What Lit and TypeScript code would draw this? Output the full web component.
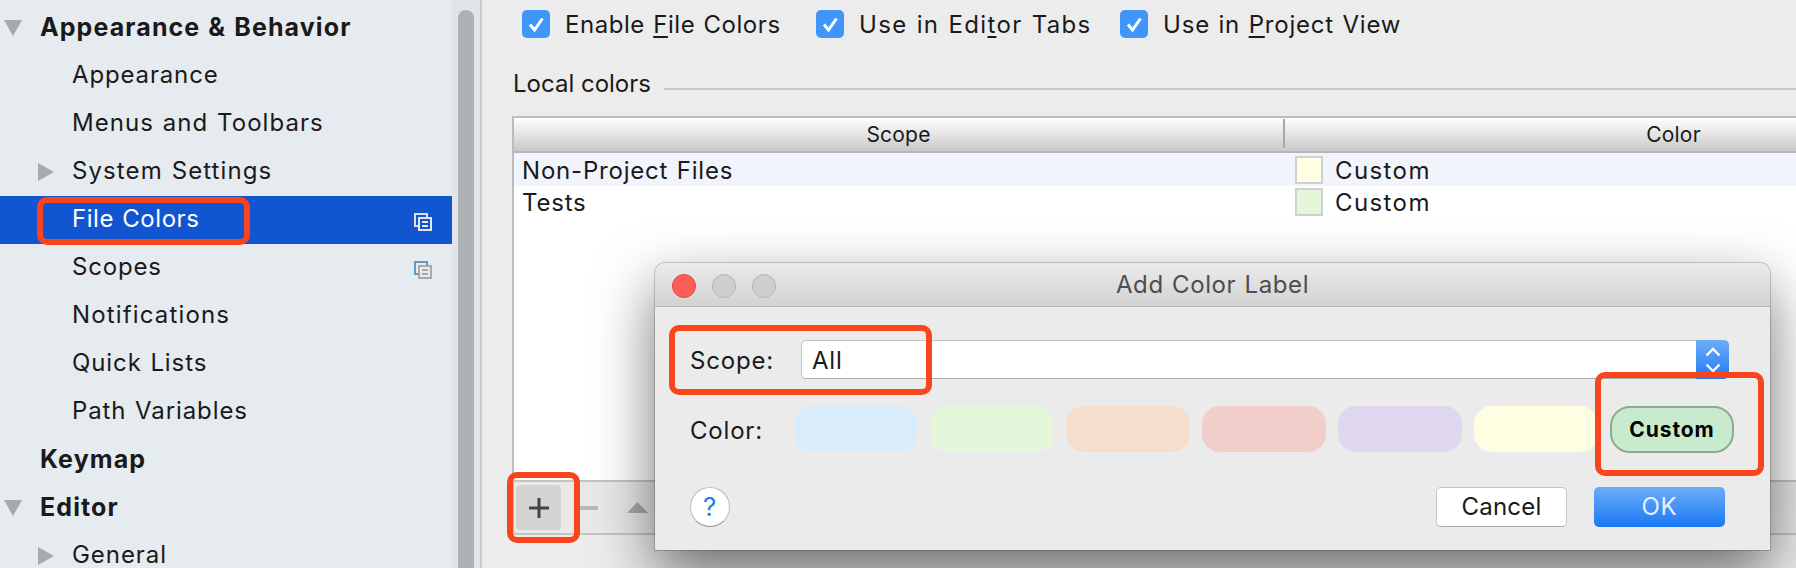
import { LitElement, html, css, svg } from "lit";
import { customElement } from "lit/decorators.js";

type NavRow = { label: string; bold?: boolean; arrow?: "down" | "right"; selected?: boolean; icon?: boolean; ls?: number };

const NAV: NavRow[] = [
  { label: "Appearance & Behavior", bold: true, arrow: "down" },
  { label: "Appearance", ls: 0.85 },
  { label: "Menus and Toolbars", ls: 1.05 },
  { label: "System Settings", arrow: "right", ls: 1.1 },
  { label: "File Colors", selected: true, icon: true, ls: 0.55 },
  { label: "Scopes", icon: true, ls: 0.8 },
  { label: "Notifications", ls: 1.15 },
  { label: "Quick Lists", ls: 0.9 },
  { label: "Path Variables", ls: 0.9 },
  { label: "Keymap", bold: true },
  { label: "Editor", bold: true, arrow: "down" },
  { label: "General", arrow: "right", ls: 0.95 },
];

const PILLS = ["#d9ecfc", "#e5f7da", "#f5dfcc", "#f2cecb", "#dfd6ef", "#fefee2"];

const check = svg`<svg viewBox="0 0 28 28" width="28" height="28"><path d="M8 14.5l4.5 5.5L20.5 8.5" fill="none" stroke="#fff" stroke-width="3"/></svg>`;

function copyIcon(back: string, front: string) {
  return svg`<svg viewBox="0 0 18 18" width="18" height="18" fill="none" stroke-width="2">
    <path d="M13 1H1v12" stroke=${back}/><path d="M1 1h12v3M1 1v12h3" stroke=${back}/>
    <rect x="5" y="5" width="12" height="12" stroke=${front}/>
    <path d="M8 9h6M8 13h6" stroke=${front}/></svg>`;
}

@customElement("app-root")
export class AppRoot extends LitElement {
  static styles = css`
    :host {
      display: flex;
      position: relative;
      width: 1796px;
      height: 568px;
      overflow: hidden;
      background: #ececec;
      font-family: Inter, "Liberation Sans", sans-serif;
      font-size: 24px;
      line-height: 24px;
      letter-spacing: 0.8px;
      word-spacing: 1px;
      color: #1a1a1a;
    }
    .side {
      width: 452px;
      flex: none;
      background: #e6ebf0;
      padding-top: 4px;
      box-sizing: border-box;
    }
    .row {
      height: 48px;
      box-sizing: border-box;
      display: flex;
      align-items: center;
      position: relative;
      padding: 0 0 3px 73px;
      margin: 0;
    }
    .row span.lbl { margin-left: -1px; }
    .row.bold { padding-left: 41px; font-weight: 700; font-size: 25px; letter-spacing: 1.1px; }
    .row.selected { background: #1255d0; color: #fff; }
    .arrow { position: absolute; top: 50%; }
    .arrow.down {
      left: 4px; margin-top: -8px;
      border-left: 9px solid transparent;
      border-right: 9px solid transparent;
      border-top: 16px solid #a9a9a9;
    }
    .arrow.right {
      left: 38px; margin-top: -9px;
      border-top: 9px solid transparent;
      border-bottom: 9px solid transparent;
      border-left: 16px solid #a9a9a9;
    }
    .copy { position: absolute; left: 414px; top: 15px; height: 18px; }
    .track {
      flex: none;
      background: #e1e5e9;
      border-right: 2px solid #c9c9c9;
      padding: 10px 0 0 6px;
      width: 22px;
    }
    .thumb { width: 16px; height: 100%; background: #adb0b5; border-radius: 8px 8px 0 0; }
    .main { flex: 1; min-width: 0; display: flex; flex-direction: column; }
    .checks { display: flex; padding: 10px 0 0 40px; height: 28px; letter-spacing: 0.55px; }
    .check { display: flex; align-items: center; gap: 15px; }
    .check > span:last-child { padding-top: 2px; }
    .check:nth-child(1) { width: 294px; }
    .check:nth-child(2) { width: 304px; letter-spacing: 1.35px; }
    .check:nth-child(3) { letter-spacing: 0.8px; }
    .box { width: 28px; height: 28px; border-radius: 5px; background: #3f96f8; flex: none; }
    .check u { text-underline-offset: 3px; }
    .legend { display: flex; height: 30px; margin: 30px 0 0 31px; padding-top: 2px; box-sizing: border-box; align-items: center; gap: 13px; letter-spacing: 0; word-spacing: 0; }
    .legend i { flex: 1; height: 2px; background: #c8c8c8; margin-top: 10px; }
    .table {
      flex: 1;
      margin: 18px 0 33px 30px;
      width: 1550px;
      display: flex;
      flex-direction: column;
      border-left: 2px solid #bcbcbc;
      border-top: 2px solid #bcbcbc;
      border-bottom: 2px solid #c4c4c4;
    }
    .head {
      display: grid;
      grid-template-columns: 769px 1fr;
      height: 33px;
      flex: none;
      background: linear-gradient(#fff, #c9c9c9);
      border-bottom: 2px solid #b6b6b6;
      font-size: 21px;
      letter-spacing: 0.2px;
      text-align: center;
      line-height: 33px;
    }
    .head span + span { position: relative; }
    .head span + span::before {
      content: "";
      position: absolute;
      left: 0; top: 1px; bottom: 3px;
      width: 2px;
      background: #a8a8a8;
    }
    .body { flex: 1; background: #fff; }
    .tr { display: grid; grid-template-columns: 769px 1fr; align-items: center; box-sizing: border-box; padding-top: 2px; }
    .tr.r1 { height: 33px; background: #f1f4fa; }
    .tr.r2 { height: 32px; padding-top: 1px; }
    .tr > span:first-child { padding-left: 8px; }
    .cell { display: flex; align-items: center; gap: 12px; padding-left: 12px; letter-spacing: 1.4px; }
    .sw { width: 24px; height: 24px; margin-top: -2px; border: 2px solid #d0d0d0; flex: none; }
    .sw.y { background: #fefee2; }
    .sw.g { background: #e5f7da; }
    .bar {
      height: 51px;
      flex: none;
      background: #e9e9e9;
      border-top: 2px solid #c4c4c4;
      display: flex;
      align-items: center;
      padding-left: 2px;
    }
    .plus {
      width: 45px; height: 45px;
      background: #d4d4d4;
      border-radius: 4px;
      display: flex; align-items: center; justify-content: center;
    }
    .minus { margin-left: 19px; display: block; }
    .up { margin-left: 29px; display: block; }
    .dialog {
      position: absolute;
      left: 655px; top: 263px;
      width: 1115px; height: 287px;
      display: flex;
      flex-direction: column;
      background: #ebebeb;
      border-radius: 10px 10px 0 0;
      box-shadow: 0 0 0 1px rgba(0,0,0,.18), 0 24px 60px rgba(0,0,0,.55);
    }
    .title {
      height: 44px;
      flex: none;
      position: relative;
      display: flex;
      align-items: center;
      justify-content: center;
      background: linear-gradient(#ebebeb, #d3d3d3);
      border-bottom: 1px solid #b4b4b4;
      border-radius: 10px 10px 0 0;
      color: #4d4d4d;
      box-sizing: border-box;
      letter-spacing: 0.6px;
    }
    .lights { position: absolute; left: 17px; top: 11px; display: flex; gap: 16px; }
    .lights b { width: 24px; height: 24px; border-radius: 50%; background: #cfcfcf; border: 1px solid #b5b5b5; box-sizing: border-box; }
    .lights b:first-child { background: #fc5f57; border-color: #df4a43; }
    .dbody { flex: 1; display: flex; flex-direction: column; padding: 33px 35px 23px 35px; }
    .frow { display: flex; align-items: center; height: 39px; }
    .frow label { width: 111px; flex: none; padding-top: 2px; }
    .combo {
      flex: 1; height: 39px;
      margin-right: 6px;
      box-sizing: border-box;
      background: #fff;
      border: 1px solid #c4c4c4;
      border-bottom-color: #aaa;
      border-radius: 5px;
      display: flex;
      align-items: center;
      justify-content: space-between;
      padding-left: 10px;
    }
    .combo > span:first-child { padding-top: 2px; }
    .stepper {
      width: 33px; height: 39px;
      margin-right: -1px;
      background: linear-gradient(#6cadf8, #1d7bf6);
      border-radius: 0 5px 5px 0;
      display: flex; align-items: center; justify-content: center;
    }
    .crow { display: flex; align-items: flex-start; height: 47px; margin-top: 27px; }
    .crow label { width: 104px; flex: none; line-height: 50px; }
    .pills { display: flex; gap: 12px; }
    .pill { width: 124px; height: 46px; border-radius: 18px; }
    .custom {
      width: 124px; height: 47px;
      box-sizing: border-box;
      margin-left: 12px;
      border-radius: 20px;
      background: #c9ebcd;
      border: 2px solid #90a991;
      color: #000;
      font-weight: 700;
      font-size: 21px;
      letter-spacing: 0.9px;
      display: flex; align-items: center; justify-content: center;
    }
    .foot { display: flex; align-items: center; margin-top: auto; height: 40px; gap: 27px; }
    .help {
      width: 40px; height: 40px;
      box-sizing: border-box;
      border-radius: 50%;
      background: #fff;
      border: 1px solid #bdbdbd;
      border-bottom-color: #999;
      color: #1a80f6;
      font-size: 26px;
      display: flex; align-items: center; justify-content: center;
      margin-right: auto;
    }
    .btn {
      height: 40px;
      box-sizing: border-box;
      border-radius: 5px;
      display: flex; align-items: center; justify-content: center;
    }
    .btn.cancel { width: 131px; background: #fff; border: 1px solid #c6c6c6; border-bottom-color: #aaa; letter-spacing: 0.2px; }
    .btn.ok { width: 131px; margin-right: 10px; background: linear-gradient(#6cadf8, #1a78f6); color: #e8f1fd; }
    .mark {
      position: absolute;
      box-sizing: border-box;
      border: 6px solid #fa441c;
      border-radius: 10px;
    }
    .m1 { left: 37px; top: 197px; width: 213px; height: 48px; }
    .m2 { left: 507px; top: 472px; width: 73px; height: 71px; }
    .m3 { left: 669px; top: 325px; width: 263px; height: 70px; }
    .m4 { left: 1595px; top: 372px; width: 169px; height: 104px; }
  `;

  private navRow(r: NavRow) {
    const cls = ["row", r.bold ? "bold" : "", r.selected ? "selected" : ""].join(" ");
    return html`<div class=${cls}>
      ${r.arrow ? html`<span class="arrow ${r.arrow}"></span>` : ""}
      <span class="lbl" style=${r.ls ? `letter-spacing:${r.ls}px` : ""}>${r.label}</span>
      ${r.icon
        ? html`<span class="copy">${r.selected ? copyIcon("#d8e2f5", "#e6e6e6") : copyIcon("#5b9bc7", "#a9a9a9")}</span>`
        : ""}
    </div>`;
  }

  render() {
    return html`
      <aside class="side">${NAV.map((r) => this.navRow(r))}</aside>
      <div class="track"><div class="thumb"></div></div>
      <main class="main">
        <div class="checks">
          <div class="check"><span class="box">${check}</span><span>Enable <u>F</u>ile Colors</span></div>
          <div class="check"><span class="box">${check}</span><span>Use in Edi<u>t</u>or Tabs</span></div>
          <div class="check"><span class="box">${check}</span><span>Use in <u>P</u>roject View</span></div>
        </div>
        <div class="legend"><span>Local colors</span><i></i></div>
        <div class="table">
          <div class="head"><span>Scope</span><span>Color</span></div>
          <div class="body">
            <div class="tr r1"><span>Non-Project Files</span><span class="cell"><span class="sw y"></span>Custom</span></div>
            <div class="tr r2"><span>Tests</span><span class="cell"><span class="sw g"></span>Custom</span></div>
          </div>
          <div class="bar">
            <span class="plus"><svg width="20" height="20" viewBox="0 0 20 20"><path d="M10 0v20M0 10h20" stroke="#444" stroke-width="3"/></svg></span>
            <svg class="minus" width="18" height="4" viewBox="0 0 18 4"><rect width="18" height="4" fill="#b8b8b8"/></svg>
            <svg class="up" width="21" height="11" viewBox="0 0 21 11"><path d="M10.5 0L21 11H0z" fill="#aaa"/></svg>
          </div>
        </div>
      </main>

      <section class="dialog">
        <div class="title">
          <div class="lights"><b></b><b></b><b></b></div>
          Add Color Label
        </div>
        <div class="dbody">
          <div class="frow">
            <label>Scope:</label>
            <div class="combo">
              <span>All</span>
              <span class="stepper"><svg width="16" height="28" viewBox="0 0 16 28" fill="none" stroke="#fff" stroke-width="2.4"><path d="M1.5 9.5L8 3l6.5 6.5M1.5 18.5L8 25l6.5-6.5"/></svg></span>
            </div>
          </div>
          <div class="crow">
            <label>Color:</label>
            <div class="pills">${PILLS.map((c) => html`<span class="pill" style="background:${c}"></span>`)}</div>
            <span class="custom">Custom</span>
          </div>
          <div class="foot">
            <span class="help">?</span>
            <span class="btn cancel">Cancel</span>
            <span class="btn ok">OK</span>
          </div>
        </div>
      </section>

      <div class="mark m1"></div>
      <div class="mark m2"></div>
      <div class="mark m3"></div>
      <div class="mark m4"></div>
    `;
  }
}
